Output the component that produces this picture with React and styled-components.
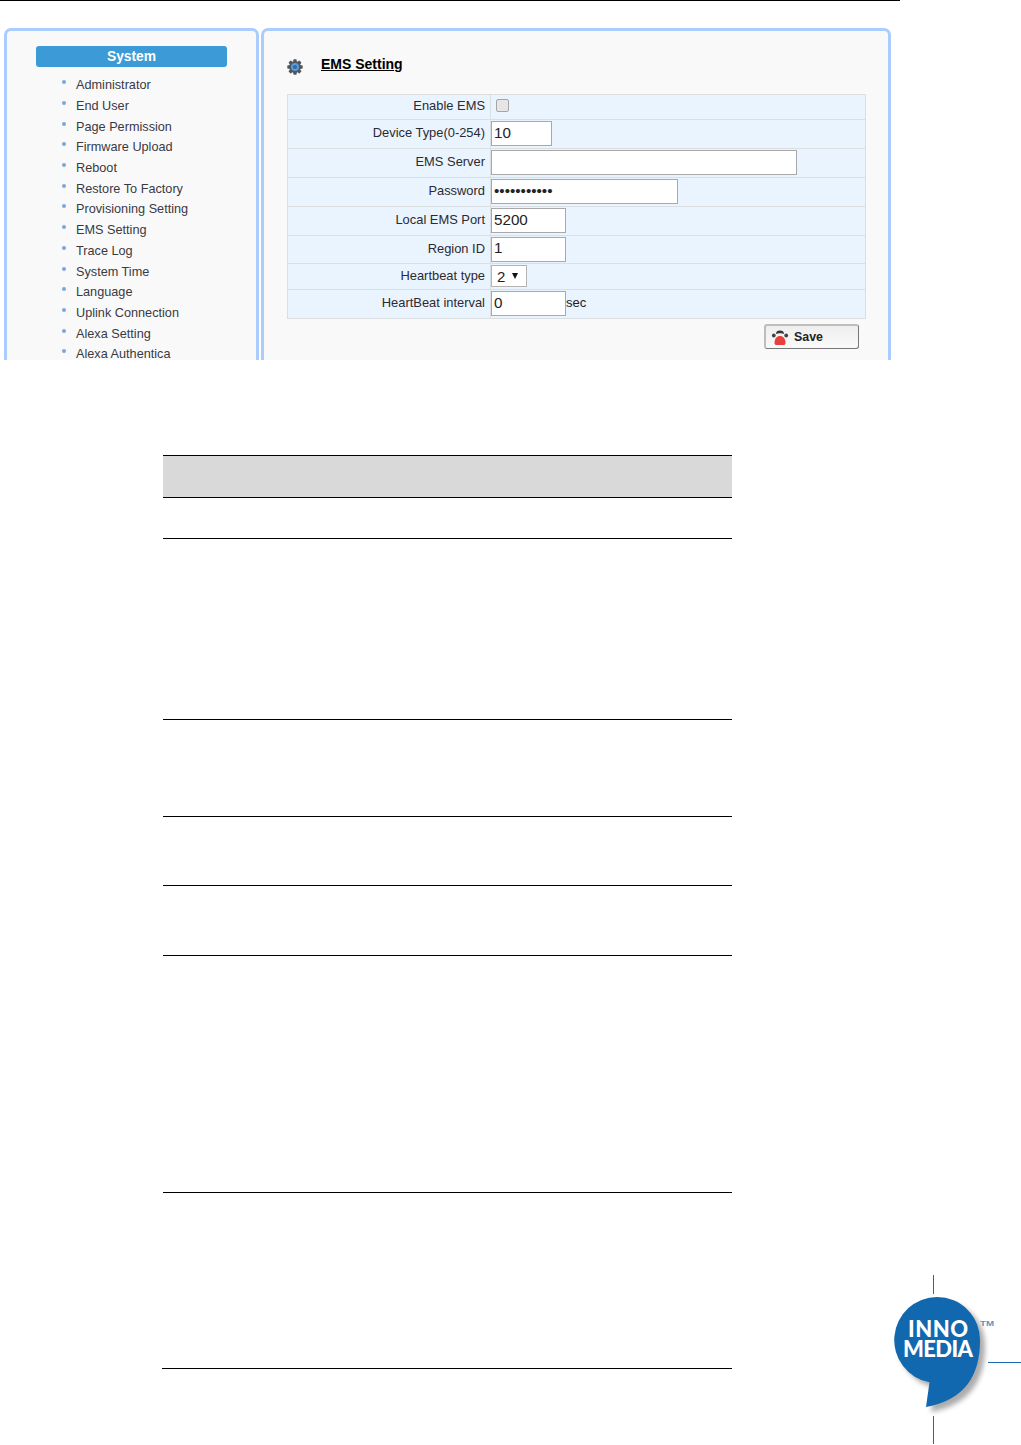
import React from 'react';
import styled, { createGlobalStyle } from 'styled-components';

const GlobalStyle = createGlobalStyle`
  html, body {
    margin: 0;
    padding: 0;
    background: #fff;
    font-family: "Liberation Sans", Arial, sans-serif;
  }
`;

const Page = styled.div`
  width: 1021px;
  height: 1445px;
  overflow: hidden;
  display: flex;
  flex-direction: column;
`;

const TopRule = styled.div`
  width: 900px;
  height: 1px;
  background: #000;
  flex: none;
`;

/* the device screenshot is cut off at y=360 */
const Shot = styled.div`
  display: flex;
  gap: 2px;
  height: 332px;
  padding: 27px 0 0 4px;
  overflow: hidden;
  flex: none;
`;

const Panel = styled.div`
  box-sizing: border-box;
  width: ${(p) => p.$width}px;
  height: 400px;
  border: 3px solid #aaccff;
  border-radius: 7px;
  background: #f9f9f9;
  flex: none;
`;

const SideInner = styled.div`
  padding: 15px 29px 0;
`;

const SideTitle = styled.div`
  height: 21px;
  line-height: 21px;
  background: #3c9ad6;
  border-radius: 3px;
  color: #fff;
  font-weight: bold;
  font-size: 13.8px;
  text-align: center;
`;

const Menu = styled.ul`
  list-style: none;
  margin: 8.1px 0 0;
  padding: 0 0 0 26px;
`;

const MenuItem = styled.li`
  display: flex;
  align-items: flex-start;
  height: 20.72px;
  line-height: 20.72px;
  font-size: 12.7px;
  color: #3a3a44;
  white-space: nowrap;

  &::before {
    content: '';
    width: 4px;
    height: 4px;
    margin: 5px 10px 0 0;
    border-radius: 50%;
    background: #7fa6d6;
    flex: none;
  }
`;

const MainInner = styled.div`
  padding: 24px 22px 0 23px;
`;

const Heading = styled.div`
  display: flex;
  align-items: flex-start;
  gap: 18px;
  height: 39px;
`;

const GearIcon = styled.svg`
  width: 16px;
  height: 16px;
  margin: 4px 0 0 0;
  flex: none;
`;

const HeadingText = styled.span`
  font-size: 14px;
  font-weight: bold;
  color: #000;
  text-decoration: underline;
  line-height: 18px;
`;

const FormTable = styled.table`
  width: 579px;
  border-collapse: collapse;
  background: #eaf4fe;
  table-layout: fixed;
`;

const Row = styled.tr`
  height: ${(p) => p.$height}px;
`;

const LabelCell = styled.td`
  box-sizing: border-box;
  width: 203px;
  padding: 0 5px 3px 0;
  border: 1px solid #dcdfe2;
  text-align: right;
  font-size: 12.9px;
  color: #2a2a33;
  white-space: nowrap;
`;

const ValueCell = styled.td`
  padding: 0 0 1px;
  border: 1px solid #dcdfe2;
  font-size: 13px;
  color: #222;
`;

const CellRow = styled.div`
  display: flex;
  align-items: flex-end;
`;

const TextInput = styled.input`
  box-sizing: border-box;
  display: block;
  width: ${(p) => p.$width}px;
  height: 25px;
  padding: 0 2px 3px;
  border: 1px solid #a9a9a9;
  border-radius: 0;
  background: #fff;
  font-family: "Liberation Sans", Arial, sans-serif;
  font-size: 15.2px;
  color: #222;
  outline: none;
`;

const Check = styled.span`
  display: block;
  box-sizing: border-box;
  width: 13px;
  height: 13px;
  margin: 0 0 3px 5px;
  border: 1px solid #a6a6a6;
  border-radius: 2px;
  background: #e6e6e6;
`;

const FakeSelect = styled.div`
  box-sizing: border-box;
  display: flex;
  align-items: center;
  width: 36px;
  height: 22px;
  padding-left: 5px;
  gap: 7px;
  border: 1px solid #b4b4b4;
  background: #fff;
  font-size: 15px;
  color: #222;
`;

const Caret = styled.span`
  width: 0;
  height: 0;
  border-left: 3px solid transparent;
  border-right: 3px solid transparent;
  border-top: 6px solid #111;
`;

const Unit = styled.span`
  font-size: 13px;
  color: #222;
  line-height: 16px;
  padding-bottom: 5px;
`;

const Actions = styled.div`
  display: flex;
  justify-content: flex-end;
  padding: 5px 7px 0 0;
`;

const SaveButton = styled.button`
  box-sizing: border-box;
  display: flex;
  align-items: center;
  gap: 5px;
  width: 95px;
  height: 25px;
  padding: 0 0 0 5px;
  border: 1px solid #777;
  border-top: 2px solid #bdbdbd;
  border-left: 2px solid #bdbdbd;
  border-radius: 3px;
  background: linear-gradient(#eeeeee, #fafafa);
  font-family: "Liberation Sans", Arial, sans-serif;
  font-size: 12.4px;
  font-weight: bold;
  color: #222;
`;

const Lower = styled.div`
  flex: 1;
  display: flex;
  justify-content: space-between;
  align-items: flex-end;
  padding-left: 163px;
`;

const DocTable = styled.div`
  width: 569px;
  align-self: flex-start;
  margin-top: 95px;
`;

const DocHead = styled.div`
  height: 41px;
  background: #d9d9d9;
  border-top: 1px solid #000;
  border-bottom: 1px solid #000;
`;

const DocRow = styled.div`
  height: ${(p) => p.$height}px;
  border-bottom: 1px solid #000;
  margin-left: ${(p) => (p.$outdent ? '-1px' : '0')};
`;

const Logo = styled.svg`
  width: 128px;
  height: 170px;
  flex: none;
  display: block;
`;

const LogoWord = styled.text`
  font-family: Lato, "Liberation Sans", sans-serif;
  font-weight: 900;
  font-size: 22px;
  fill: #fff;
`;

const LogoMark = styled.text`
  font-family: "Liberation Sans", Arial, sans-serif;
  font-weight: bold;
  font-size: 8px;
  fill: #5f93bd;
`;

const menuItems = [
  'Administrator', 'End User', 'Page Permission', 'Firmware Upload', 'Reboot',
  'Restore To Factory', 'Provisioning Setting', 'EMS Setting', 'Trace Log',
  'System Time', 'Language', 'Uplink Connection', 'Alexa Setting', 'Alexa Authentica',
];

const docRows = [40, 180, 96, 68, 69, 236];

const gearTeeth = [0, 45, 90, 135];

const bubble = 'M937 1297A43 43 0 0 1 980 1341C980 1375 965 1400 926 1407L929.500 1382.300A43 43 0 0 1 937 1297Z';

const App = () => (
  <Page>
    <GlobalStyle />
    <TopRule />
    <Shot>
      <Panel $width={255}>
        <SideInner>
          <SideTitle>System</SideTitle>
          <Menu>
            {menuItems.map((item) => (
              <MenuItem key={item}>{item}</MenuItem>
            ))}
          </Menu>
        </SideInner>
      </Panel>
      <Panel $width={630}>
        <MainInner>
          <Heading>
            <GearIcon viewBox="0 0 16 16">
              {gearTeeth.map((a) => (
                <rect key={a} x="6.300" y="0.300" width="3.400" height="15.400" rx="0.700" fill="#50565c" transform={`rotate(${a} 8 8)`} />
              ))}
              <circle cx="8" cy="8" r="5.900" fill="#50565c" />
              <circle cx="8" cy="8" r="4" fill="#5b9ad8" />
              <circle cx="8" cy="8" r="2.100" fill="#2f6cae" />
            </GearIcon>
            <HeadingText>EMS Setting</HeadingText>
          </Heading>
          <FormTable>
            <tbody>
              <Row $height={25}>
                <LabelCell>Enable EMS</LabelCell>
                <ValueCell><Check /></ValueCell>
              </Row>
              <Row $height={29}>
                <LabelCell>Device Type(0-254)</LabelCell>
                <ValueCell><TextInput $width={61} value="10" readOnly /></ValueCell>
              </Row>
              <Row $height={29}>
                <LabelCell>EMS Server</LabelCell>
                <ValueCell><TextInput $width={306} value="" readOnly /></ValueCell>
              </Row>
              <Row $height={29}>
                <LabelCell>Password</LabelCell>
                <ValueCell><TextInput $width={187} type="password" value="12345678901" readOnly /></ValueCell>
              </Row>
              <Row $height={29}>
                <LabelCell>Local EMS Port</LabelCell>
                <ValueCell><TextInput $width={75} value="5200" readOnly /></ValueCell>
              </Row>
              <Row $height={28}>
                <LabelCell>Region ID</LabelCell>
                <ValueCell><TextInput $width={75} value="1" readOnly /></ValueCell>
              </Row>
              <Row $height={26}>
                <LabelCell>Heartbeat type</LabelCell>
                <ValueCell>
                  <FakeSelect>2<Caret /></FakeSelect>
                </ValueCell>
              </Row>
              <Row $height={29}>
                <LabelCell>HeartBeat interval</LabelCell>
                <ValueCell>
                  <CellRow>
                    <TextInput $width={75} value="0" readOnly />
                    <Unit>sec</Unit>
                  </CellRow>
                </ValueCell>
              </Row>
            </tbody>
          </FormTable>
          <Actions>
            <SaveButton>
              <svg width="18" height="16" viewBox="0 0 18 16">
                <path d="M5 5C5 2.500 6.500 1.500 9 1.500C11.500 1.500 13 2.500 13 5C11 4 7 4 5 5Z" fill="#333" />
                <circle cx="2.800" cy="6.500" r="1.900" fill="#444" />
                <circle cx="15.200" cy="6.500" r="1.900" fill="#444" />
                <path d="M3.500 14C3.500 9.500 6 7 9 7C12 7 14.500 9.500 14.500 14C14.500 15.500 13.500 16 12.500 16H5.500C4.500 16 3.500 15.500 3.500 14Z" fill="#e8413c" />
              </svg>
              Save
            </SaveButton>
          </Actions>
        </MainInner>
      </Panel>
    </Shot>
    <Lower>
      <DocTable>
        <DocHead />
        {docRows.map((h, i) => (
          <DocRow key={i} $height={h} />
        ))}
        <DocRow $height={175} $outdent />
      </DocTable>
      <Logo viewBox="893 1275 128 170">
        <defs>
          <filter id="logoShadow" x="-20%" y="-20%" width="150%" height="150%">
            <feGaussianBlur stdDeviation="2.500" />
          </filter>
        </defs>
        <path d="M933.500 1275V1294M933.500 1416V1444" stroke="#1b6cb0" strokeWidth="1" fill="none" />
        <path d="M988 1362.500H1021" stroke="#1b6cb0" strokeWidth="1" fill="none" />
        <path d={bubble} fill="#888" opacity="0.700" filter="url(#logoShadow)" transform="translate(5 5)" />
        <path d={bubble} fill="#1268ae" />
        <LogoWord x="908" y="1337" textLength="60">INNO</LogoWord>
        <LogoWord x="903" y="1357" textLength="70">MEDIA</LogoWord>
        <LogoMark x="980" y="1326" textLength="14" lengthAdjust="spacingAndGlyphs">TM</LogoMark>
      </Logo>
    </Lower>
  </Page>
);

export default App;
